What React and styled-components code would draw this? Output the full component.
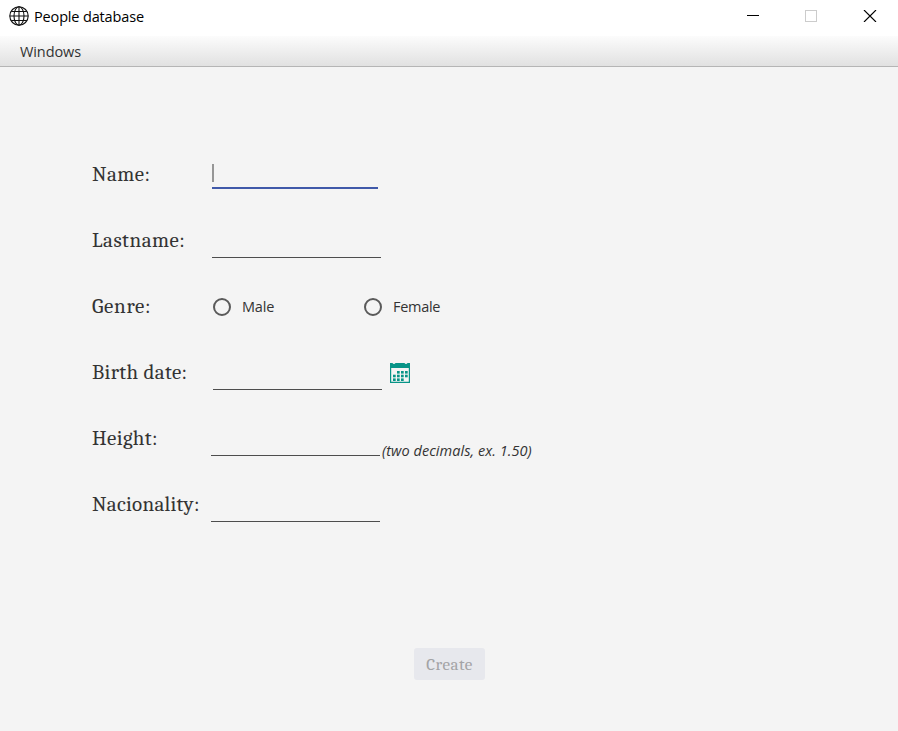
import React from "react";
import styled, { createGlobalStyle } from "styled-components";

const Global = createGlobalStyle`
  * { box-sizing: border-box; }
  body { margin: 0; background: #f4f4f4; overflow: hidden; }
`;

const Window = styled.div`
  width: 898px;
  height: 731px;
  display: flex;
  flex-direction: column;
  background: #f4f4f4;
  color: #333;
  font: 15px/20px "Open Sans", sans-serif;
`;

const TitleBar = styled.header`
  height: 36px;
  flex: none;
  display: flex;
  align-items: flex-start;
  background: #fff;
  color: #000;
  padding: 6px 0 0 9px;
`;

const Title = styled.span`
  margin: 1px auto 0 5px;
  font-size: 14.5px;
  letter-spacing: -0.15px;
  white-space: nowrap;
`;

const WindowControls = styled.div`
  display: flex;
  gap: 46px;
  padding: 4px 21px 0 0;
`;

const MenuBar = styled.nav`
  height: 31px;
  flex: none;
  padding: 5px 20px 0;
  background: linear-gradient(#fcfcfc, #e1e1e1);
  border-bottom: 1px solid #b5b5b5;
`;

const Text = styled.span`
  display: inline-block;
  white-space: nowrap;
  font-size: 14.5px;
  letter-spacing: ${(p) => p.$spacing || 0}px;
`;

const Form = styled.form`
  margin: 74px 0 0 92px;
  display: flex;
  flex-direction: column;
`;

const Row = styled.div`
  height: 66px;
  display: flex;
  align-items: flex-start;
`;

const Label = styled.label`
  width: 119px;
  flex: none;
  padding-top: 21px;
  font: 21px/24px Cambria, "Liberation Serif", serif;
  letter-spacing: ${(p) => p.$spacing}px;
  white-space: nowrap;
`;

const Field = styled.div`
  width: ${(p) => (p.$focused ? 166 : 169)}px;
  height: ${(p) => (p.$focused ? 48 : 51)}px;
  margin-left: ${(p) => p.$offset || 0}px;
  border-bottom: ${(p) => (p.$focused ? "2px solid #4059a9" : "1px solid #4d4d4d")};
`;

const Caret = styled.div`
  width: 2px;
  height: 18px;
  margin-top: 23px;
  background: #969696;
`;

const Option = styled.div`
  width: 151px;
  padding: 24px 0 0 2px;
  display: flex;
  gap: 11px;
`;

const Radio = styled.span`
  width: 18px;
  height: 18px;
  margin-top: 1px;
  border: 2px solid #5a5a5a;
  border-radius: 50%;
`;

const CalendarButton = styled.span`
  display: flex;
  margin: 24px 0 0 8px;
`;

const Hint = styled(Text)`
  margin: 36px 0 0 2px;
  font-style: italic;
`;

const CreateButton = styled.button`
  width: 71px;
  height: 32px;
  margin: 111px 0 0 414px;
  padding: 0;
  border: 0;
  border-radius: 3px;
  background: #e7e8ed;
  color: #a3a3a5;
  font: 17px/33px Cambria, "Liberation Serif", serif;
  letter-spacing: 0.5px;
`;

const Globe = () => (
  <svg width="20" height="20" viewBox="0 0 20 20" fill="none" stroke="#111" strokeWidth="1.1">
    <circle cx="10" cy="10" r="9.2" />
    <ellipse cx="10" cy="10" rx="5" ry="9.2" />
    <path d="M10 .8v18.4M.8 10h18.4M2.3 5.5h15.4M2.3 14.5h15.4" />
  </svg>
);

const Minimize = () => (
  <svg width="12" height="12" shapeRendering="crispEdges">
    <path d="M0 5.5h12" stroke="#000" />
  </svg>
);

const Maximize = () => (
  <svg width="12" height="12" shapeRendering="crispEdges">
    <rect x=".5" y=".5" width="11" height="11" fill="none" stroke="#ccc" />
  </svg>
);

const Close = () => (
  <svg width="14" height="12">
    <path d="M1 0L13 12M13 0L1 12" stroke="#000" strokeWidth="1.15" />
  </svg>
);

const DAYS = [
  [7, 8], [11, 8], [15, 8],
  [3, 11.7], [7, 11.7], [11, 11.7], [15, 11.7],
  [3, 15.4], [7, 15.4], [11, 15.4],
];

const Calendar = () => (
  <svg width="20" height="20" fill="#079487">
    <path d="M0 0h2.5q.5 1 1.5 1t1.500-1h9q.5 1 1.500 1t1.500-1H20v20H0ZM1.200 5v13.800h17.600V5Z" fillRule="evenodd" />
    {DAYS.map(([x, y]) => (
      <rect key={`${x}-${y}`} x={x} y={y} width="2.7" height="2.6" />
    ))}
  </svg>
);

export default function App() {
  return (
    <>
      <Global />
      <Window>
        <TitleBar>
          <Globe />
          <Title>People database</Title>
          <WindowControls>
            <Minimize />
            <Maximize />
            <Close />
          </WindowControls>
        </TitleBar>
        <MenuBar>
          <Text $spacing={-0.1}>Windows</Text>
        </MenuBar>
        <Form>
          <Row>
            <Label $spacing={0.45}>Name:</Label>
            <Field $focused $offset={1}>
              <Caret />
            </Field>
          </Row>
          <Row>
            <Label $spacing={0.5}>Lastname:</Label>
            <Field $offset={1} />
          </Row>
          <Row>
            <Label $spacing={0.7}>Genre:</Label>
            <Option>
              <Radio />
              <Text $spacing={-0.2}>Male</Text>
            </Option>
            <Option>
              <Radio />
              <Text $spacing={-0.3}>Female</Text>
            </Option>
          </Row>
          <Row>
            <Label $spacing={0.35}>Birth date:</Label>
            <Field $offset={2} />
            <CalendarButton>
              <Calendar />
            </CalendarButton>
          </Row>
          <Row>
            <Label $spacing={0.4}>Height:</Label>
            <Field />
            <Hint $spacing={0.05}>(two decimals, ex. 1.50)</Hint>
          </Row>
          <Row>
            <Label $spacing={0.25}>Nacionality:</Label>
            <Field />
          </Row>
        </Form>
        <CreateButton disabled>Create</CreateButton>
      </Window>
    </>
  );
}
